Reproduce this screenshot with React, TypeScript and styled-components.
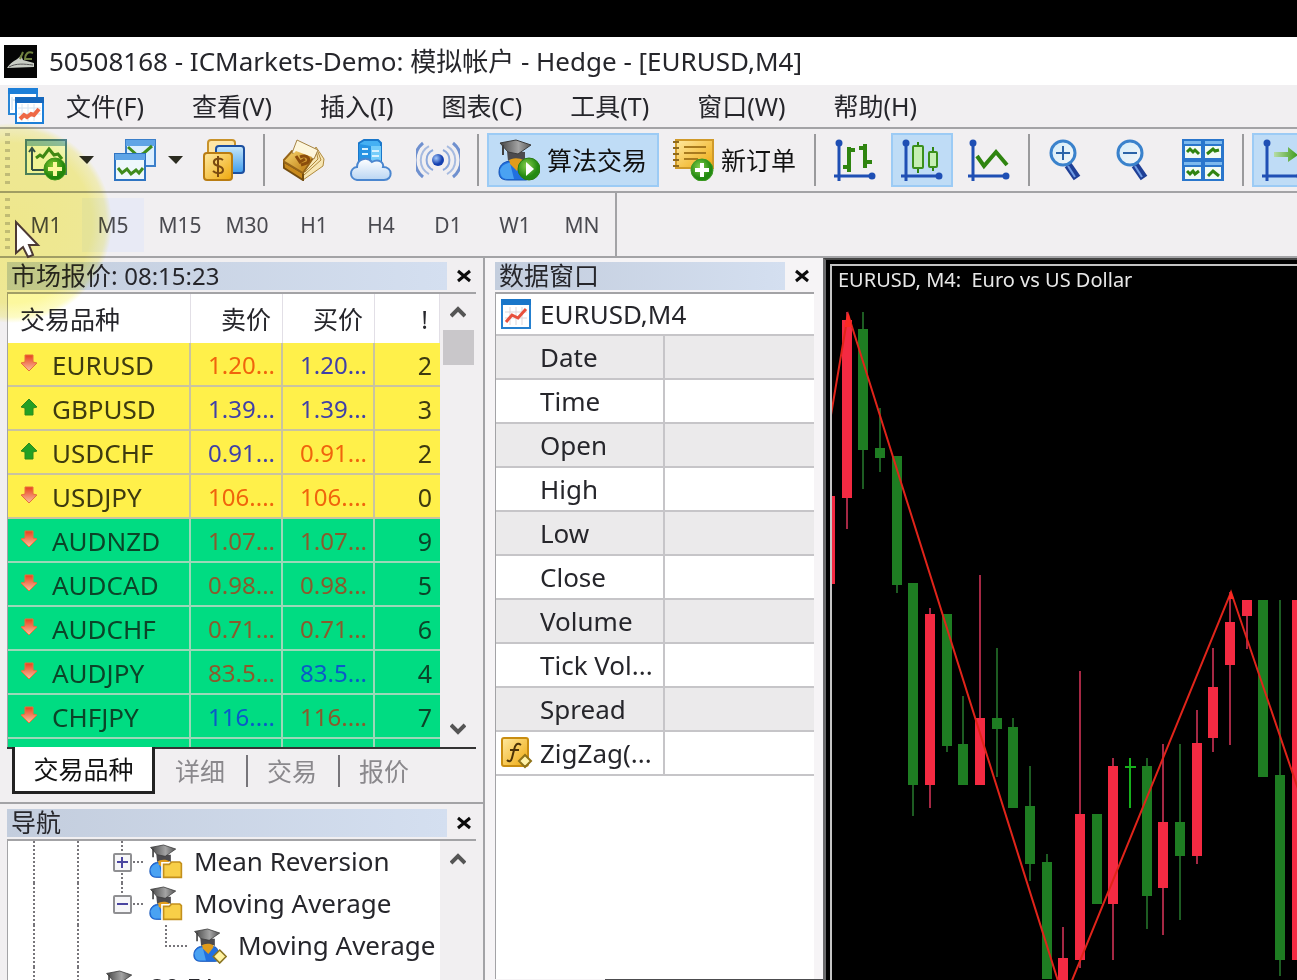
import React from "react";
import styled, { createGlobalStyle } from "styled-components";

const LINE = "#a3a3a6";
const FACE = "#f1eff1";

const GlobalStyle = createGlobalStyle`
  * { box-sizing: border-box; }
  html, body { margin: 0; padding: 0; background: #000; }
  body {
    font-family: "Noto Sans", "Noto Sans CJK SC", sans-serif;
    font-size: 25px;
    line-height: 32px;
    color: #26262b;
    overflow: hidden;
  }
  button {
    font: inherit;
    color: inherit;
    background: none;
    border: 0;
    padding: 0;
    margin: 0;
  }
  svg { display: block; flex: none; }
`;

/* ---------- frame ---------- */

const Window = styled.div`
  position: relative;
  display: flex;
  flex-direction: column;
  height: 100vh;
  padding-top: 37px;
  background: #000;
  overflow: hidden;
`;

const TitleBar = styled.header`
  display: flex;
  align-items: center;
  gap: 12px;
  height: 48px;
  padding: 0 4px;
  background: #fff;
`;

const TitleText = styled.h1`
  margin: 0;
  font-size: 26px;
  font-weight: 400;
  white-space: pre;
`;

const MenuBar = styled.nav`
  display: flex;
  align-items: center;
  gap: 48px;
  height: 42px;
  padding-left: 8px;
  background: ${FACE};
`;

const MenuIcon = styled.span`
  width: 36px;
  margin-right: -26px;
`;

const MenuItem = styled.button`
  white-space: nowrap;
`;

const ToolRow = styled.div<{ $height: number }>`
  display: flex;
  align-items: center;
  gap: 5px;
  height: ${(p) => p.$height}px;
  padding-left: 5px;
  border-top: 2px solid ${LINE};
  background: ${FACE};
  overflow: hidden;
`;

const Grip = styled.span`
  flex: none;
  width: 5px;
  height: 54px;
  background: repeating-linear-gradient(#c4c2c4 0 3px, transparent 3px 8px);
`;

const Separator = styled.span`
  flex: none;
  width: 2px;
  height: 52px;
  margin: 0 3px;
  background: #9a9a9c;
`;

const ToolButton = styled.button<{ $on?: boolean }>`
  flex: none;
  display: flex;
  align-items: center;
  justify-content: center;
  width: 62px;
  height: 54px;
  background: ${(p) => (p.$on ? "#bfdcf6" : "transparent")};
  border: 2px solid ${(p) => (p.$on ? "#9ccbf5" : "transparent")};
`;

const SplitButton = styled.button`
  flex: none;
  display: flex;
  align-items: center;
  gap: 12px;
  width: 84px;
  height: 54px;
  padding-left: 10px;
`;

const LabelButton = styled(ToolButton)<{ $width: number }>`
  width: ${(p) => p.$width}px;
  justify-content: flex-start;
  gap: 7px;
  padding-left: ${(p) => (p.$on ? 9 : 6)}px;
  white-space: nowrap;
  color: #111;
`;

const FrameButton = styled.button<{ $hot?: boolean }>`
  flex: none;
  width: 62px;
  height: 54px;
  font-size: 21px;
  color: #4a4a50;
  background: ${(p) => (p.$hot ? "#e8eaf5" : "transparent")};
`;

const FrameEnd = styled.span`
  flex: none;
  align-self: stretch;
  width: 2px;
  margin-left: -3px;
  background: ${LINE};
`;

const Workspace = styled.main`
  flex: 1;
  min-height: 0;
  display: flex;
  border-top: 2px solid ${LINE};
  background: ${FACE};
`;

/* ---------- docked panels ---------- */

const Dock = styled.div`
  flex: none;
  display: flex;
  flex-direction: column;
  width: 485px;
  border-right: 2px solid ${LINE};
`;

const Panel = styled.section<{ $grow?: boolean }>`
  display: flex;
  flex-direction: column;
  flex: ${(p) => (p.$grow ? "1" : "none")};
  min-height: 0;
  padding: 4px 7px 0;
`;

const DataDock = styled.section`
  flex: none;
  display: flex;
  flex-direction: column;
  width: 338px;
  padding: 4px 9px 0 10px;
  background: #f6f4f6;
`;

const DockEdge = styled.div`
  flex: none;
  height: 1px;
  margin: 0 -9px 0 110px;
  background: #4c4c4e;
`;

const PanelHead = styled.div`
  flex: none;
  display: flex;
  height: 28px;
  margin-bottom: 2px;
`;

const PanelTitle = styled.h2`
  flex: 1;
  margin: 0;
  padding-left: 4px;
  font-size: 25px;
  font-weight: 400;
  line-height: 27px;
  background: linear-gradient(90deg, #c3cddd, #d4dff0);
  white-space: nowrap;
`;

const ClockText = styled.span`
  font-size: 24px;
`;

const CloseButton = styled.button`
  width: 29px;
  padding-left: 4px;
  display: flex;
  align-items: center;
  justify-content: center;
`;

const PanelBody = styled.div<{ $height?: number }>`
  display: flex;
  flex: ${(p) => (p.$height ? "none" : "1")};
  height: ${(p) => (p.$height ? `${p.$height}px` : "auto")};
  min-height: 0;
  border-top: 2px solid ${LINE};
  border-left: 1px solid ${LINE};
  overflow: hidden;
`;

const ScrollBar = styled.div`
  flex: none;
  width: 36px;
  margin-left: auto;
  display: flex;
  flex-direction: column;
  align-items: center;
  background: ${FACE};
`;

const ScrollButton = styled.button<{ $end?: boolean }>`
  display: flex;
  align-items: center;
  justify-content: center;
  width: 32px;
  height: 36px;
  margin-top: ${(p) => (p.$end ? "auto" : "0")};
`;

const Thumb = styled.span`
  width: 31px;
  height: 35px;
  background: #c9c7ca;
`;

/* ---------- market watch ---------- */

const QuoteTable = styled.table`
  width: 432px;
  table-layout: fixed;
  border-collapse: separate;
  border-spacing: 0;
  background: #fff;
  align-self: flex-start;
`;

const QuoteHead = styled.th<{ $right?: boolean }>`
  height: 49px;
  padding: 0 11px 0 12px;
  font-weight: 400;
  text-align: ${(p) => (p.$right ? "right" : "left")};
  border-right: 1px solid #e2dfe6;
`;

const QuoteCell = styled.td<{ $tone: string }>`
  height: 44px;
  padding: 2px 6px 0 0;
  font-size: 24px;
  text-align: right;
  color: ${(p) => p.$tone};
  border-right: 2px solid #bfc0a8;
  border-bottom: 2px solid #bfc0a8;
  &:last-child {
    padding-right: 8px;
    font-size: 25px;
    border-right-width: 0;
  }
`;

const SymbolCell = styled(QuoteCell)`
  padding: 2px 0 0;
  font-size: 26px;
`;

const SymbolInner = styled.div`
  display: flex;
  align-items: center;
  gap: 14px;
  padding-left: 12px;
`;

const QuoteRow = styled.tr<{ $fill: string; $rule: string }>`
  background: ${(p) => p.$fill};
  ${QuoteCell} { border-color: ${(p) => p.$rule}; }
`;

const TabStrip = styled.div`
  display: flex;
  height: 49px;
  padding: 0 0 2px 5px;
  border-top: 2px solid #333;
`;

const ActiveTab = styled.button`
  width: 143px;
  height: 47px;
  margin-top: -2px;
  background: #fff;
  border: 3px solid #222;
  border-top: 0;
  color: #111;
`;

const Tab = styled.button`
  display: flex;
  align-items: center;
  justify-content: center;
  width: 92px;
  height: 44px;
  padding-right: 2px;
  color: #8a888c;
  &:not(:last-child)::after {
    content: "";
    width: 2px;
    height: 32px;
    margin: 0 -23px 0 21px;
    background: #77757a;
  }
`;

const DockSplit = styled.div`
  flex: none;
  height: 8px;
  margin-bottom: 1px;
  border-bottom: 2px solid ${LINE};
`;

/* ---------- navigator ---------- */

const Tree = styled.ul`
  flex: 1;
  margin: 0;
  padding: 0 0 0 4px;
  list-style: none;
  background: #fff;
`;

const TreeRow = styled.li`
  display: flex;
  align-items: center;
  height: 42px;
  white-space: nowrap;
  font-size: 26px;
  line-height: 28px;
`;

const TreeIcon = styled.span`
  display: flex;
  justify-content: center;
  width: 44px;
  margin-right: 6px;
`;

const TreeLabel = styled.span`
  padding-bottom: 3px;
`;

/* ---------- data window ---------- */

const DataBody = styled(PanelBody)`
  background: #fff;
  font-size: 26px;
`;

const DataTable = styled.table`
  width: 100%;
  table-layout: fixed;
  border-collapse: separate;
  border-spacing: 0;
  align-self: flex-start;
`;

const DataRow = styled.tr<{ $shade?: boolean }>`
  background: ${(p) => (p.$shade ? "#ebeaeb" : "#fff")};
`;

const DataName = styled.th<{ $wide?: boolean }>`
  height: ${(p) => (p.$wide ? 42 : 44)}px;
  padding: 0;
  font-weight: 400;
  text-align: left;
  border-bottom: 2px solid #c6c5c8;
  border-right: ${(p) => (p.$wide ? "0" : "2px solid #c6c5c8")};
`;

const DataValue = styled.td`
  border-bottom: 2px solid #c6c5c8;
`;

const NameInner = styled.div`
  display: flex;
  align-items: center;
  padding-left: 5px;
  white-space: nowrap;
`;

const NameIcon = styled.span`
  flex: none;
  width: 39px;
`;

/* ---------- chart ---------- */

const ChartWindow = styled.section`
  flex: 1;
  min-width: 0;
  display: flex;
  padding: 4px 0 0 4px;
  border-left: 3px solid #6b6b6d;
  border-top: 2px solid #444;
  background: #000;
`;

const ChartArea = styled.div`
  flex: 1;
  min-width: 0;
  display: flex;
  flex-direction: column;
  border-left: 2px solid #c4c4c4;
  border-top: 2px solid #c4c4c4;
`;

const ChartTitle = styled.h2`
  flex: none;
  margin: 0;
  padding-left: 6px;
  height: 27px;
  font-size: 20px;
  font-weight: 400;
  line-height: 28px;
  color: #e8e8e8;
  white-space: pre;
`;

const Plot = styled.div`
  flex: 1;
  min-height: 0;
  overflow: hidden;
`;

/* ---------- pointer ---------- */

const Spotlight = styled.div`
  position: absolute;
  left: -88px;
  top: 123px;
  width: 200px;
  height: 200px;
  border-radius: 50%;
  background: radial-gradient(closest-side, #fcf794 0, #fcf89e 80%, #fdfbc4 94%, #fff 100%);
  mix-blend-mode: multiply;
  pointer-events: none;
`;

const Pointer = styled.div`
  position: absolute;
  left: 13px;
  top: 219px;
  pointer-events: none;
`;

/* ---------- icons ---------- */

const Gradients = () => (
  <svg width="0" height="0" style={{ position: "absolute" }} aria-hidden>
    <defs>
      <linearGradient id="gold" x1="0" y1="0" x2="1" y2="1">
        <stop offset="0" stopColor="#ffe9a0" />
        <stop offset="1" stopColor="#eea80c" />
      </linearGradient>
      <linearGradient id="brass" x1="0" y1="0" x2="1" y2="1">
        <stop offset="0" stopColor="#f6d26a" />
        <stop offset="1" stopColor="#b9780f" />
      </linearGradient>
      <linearGradient id="sky" x1="0" y1="0" x2="0" y2="1">
        <stop offset="0" stopColor="#c9e8fb" />
        <stop offset="1" stopColor="#3f9ded" />
      </linearGradient>
      <linearGradient id="cloud" x1="0" y1="0" x2="0" y2="1">
        <stop offset="0" stopColor="#ffffff" />
        <stop offset="1" stopColor="#b9d5f3" />
      </linearGradient>
      <linearGradient id="cap" x1="0" y1="0" x2="1" y2="0">
        <stop offset="0" stopColor="#444" />
        <stop offset="0.6" stopColor="#a4a4a4" />
        <stop offset="1" stopColor="#555" />
      </linearGradient>
      <radialGradient id="leaf" cx="0.4" cy="0.35">
        <stop offset="0" stopColor="#86cf4c" />
        <stop offset="1" stopColor="#238a12" />
      </radialGradient>
      <radialGradient id="ball" cx="0.35" cy="0.35">
        <stop offset="0" stopColor="#a5c8fa" />
        <stop offset="1" stopColor="#1440b0" />
      </radialGradient>
      <linearGradient id="down" x1="0" y1="0" x2="0" y2="1">
        <stop offset="0" stopColor="#e8401c" />
        <stop offset="1" stopColor="#fbc0a0" />
      </linearGradient>
      <linearGradient id="glass" x1="0" y1="0" x2="1" y2="1">
        <stop offset="0" stopColor="#d2ecfa" />
        <stop offset="1" stopColor="#f7f7f7" />
      </linearGradient>
      <linearGradient id="shift" x1="0" y1="0" x2="1" y2="0">
        <stop offset="0" stopColor="#b6dca6" />
        <stop offset="1" stopColor="#3f9c1c" />
      </linearGradient>
    </defs>
  </svg>
);

const PlusBadge = ({ x, y, r = 11 }: { x: number; y: number; r?: number }) => (
  <g>
    <circle cx={x} cy={y} r={r} fill="url(#leaf)" stroke="#3f9a24" />
    <path d={`M${x - 7} ${y}H${x + 7}M${x} ${y - 7}V${y + 7}`} stroke="#fff" strokeWidth="4" />
  </g>
);

const LogoIcon = () => (
  <svg width="33" height="33" viewBox="0 0 33 33">
    <rect width="33" height="33" fill="#050505" />
    <path d="M3 23C8 15 13 16 17 10L19 15L30 18V22Z" fill="#c9cdc4" />
    <path d="M5 22C12 18 20 19 29 20" stroke="#555" fill="none" />
    <path d="M19 7L16 14M29 8C24 6 21 9 21 14L28 14" stroke="#71813f" strokeWidth="2" fill="none" />
  </svg>
);

const TerminalIcon = () => (
  <svg width="36" height="36" viewBox="0 0 36 36">
    <rect x="1" y="1" width="28" height="25" fill="#fff" stroke="#2a86d6" strokeWidth="2" />
    <rect x="0" y="0" width="30" height="6" fill="#1d7fd8" />
    <path d="M4 9V22M8 12H5" stroke="#bcd7ee" />
    <rect x="8" y="10" width="27" height="25" fill="#fff" stroke="#1d7fd8" strokeWidth="2" />
    <rect x="7" y="9" width="29" height="6" fill="#1668bd" />
    <path d="M14 16V33M20 16V33M26 16V33M10 20H33M10 26H33" stroke="#d6e4f0" />
    <path d="M12 31L16 27L19 29L23 26L26 27L31 21" stroke="#ee6846" strokeWidth="4" fill="none" />
  </svg>
);

const NewChartIcon = () => (
  <svg width="42" height="42" viewBox="0 0 42 42">
    <rect x="1" y="1" width="40" height="34" fill="#f2faf2" stroke="#4d8290" strokeWidth="2" />
    <rect x="2" y="2" width="38" height="5" fill="#8dbfc9" />
    <path d="M7 31V10M4 13L7 9L10 13M7 31H20" stroke="#33536d" strokeWidth="2" fill="none" />
    <path d="M11 19L15 16L18 18L24 10L29 16L33 15L37 20" stroke="#3f8c1c" strokeWidth="3" fill="none" />
    <PlusBadge x={30} y={30} />
  </svg>
);

const ProfilesIcon = () => (
  <svg width="42" height="42" viewBox="0 0 42 42">
    <rect x="12" y="1" width="29" height="26" fill="#dcefff" stroke="#3b7fca" strokeWidth="2" />
    <rect x="12" y="1" width="29" height="6" fill="#5fa4e6" />
    <path d="M14 8L24 17L30 14L38 7" stroke="#3f8c1c" strokeWidth="3" fill="none" />
    <rect x="1" y="15" width="30" height="26" fill="#eef8fb" stroke="#2f74c2" strokeWidth="2" />
    <rect x="1" y="15" width="30" height="6" fill="#5fa4e6" />
    <path d="M4 29L8 34L13 30L17 35L22 31L25 34L29 29" stroke="#3f8c1c" strokeWidth="3" fill="none" />
  </svg>
);

const SymbolsIcon = () => (
  <svg width="42" height="42" viewBox="0 0 42 42">
    <rect x="5" y="1" width="27" height="26" rx="3" fill="#ffe7a6" stroke="#c8922a" strokeWidth="2" />
    <rect x="13" y="7" width="28" height="27" rx="3" fill="url(#sky)" stroke="#1c4fa0" strokeWidth="2" />
    <rect x="1" y="14" width="28" height="27" rx="3" fill="url(#gold)" stroke="#b97c12" strokeWidth="2" />
    <path d="M20 21C16 18 10 20 11 24C12 28 20 26 20 31C20 35 13 35 10 32M15 17V38" stroke="#7a4a10" strokeWidth="2" fill="none" />
  </svg>
);

const BookIcon = () => (
  <svg width="42" height="42" viewBox="0 0 42 42">
    <path d="M33 8L41 20L40 27L20 41L20 33Z" fill="#f7e6b4" stroke="#b08a3c" />
    <path d="M35 13L38 21L21 36M33 11L35 20L22 33" stroke="#b08a3c" fill="none" />
    <path d="M0 22L20 34V41L1 29Z" fill="#c98a1c" stroke="#744d10" strokeWidth="2" />
    <path d="M0 22L9 12L32 16L20 34Z" fill="url(#brass)" stroke="#96651a" strokeWidth="2" />
    <path d="M9 14L14 1L35 11L31 20L24 17Z" fill="#fdf6dc" stroke="#a58344" />
    <path d="M8 17L13 12L29 18L20 31L4 22Z" fill="url(#brass)" />
    <path d="M13 17L17 23L22 20M17 18C24 15 28 20 24 24L18 26" stroke="#8b4d0c" strokeWidth="3" fill="none" />
  </svg>
);

const CloudIcon = () => (
  <svg width="42" height="42" viewBox="0 0 42 42">
    <path d="M9 4L14 1H28L31 4V25H9Z" fill="#45b0f3" stroke="#1a77ca" strokeWidth="2" />
    <path d="M9 5L21 7V25H9Z" fill="#2793e4" />
    <path d="M21 7H31V25H21Z" fill="#75cdfa" />
    <path d="M22 12H29M22 17H29M12 10H18M12 15H18" stroke="#d8f2ff" strokeWidth="2" />
    <path d="M7 41C-1 40 -1 29 7 28C7 20 17 17 22 23C29 19 34 24 33 28C43 28 43 41 34 41Z" fill="url(#cloud)" stroke="#4b86cf" strokeWidth="2" />
  </svg>
);

const SignalIcon = () => (
  <svg width="44" height="42" viewBox="0 0 44 42">
    <circle cx="22" cy="21" r="6" fill="url(#ball)" />
    <g fill="none" strokeWidth="2">
      <path d="M17 11A11 11 0 0 0 17 31M27 11A11 11 0 0 1 27 31" stroke="#8ba8dc" />
      <path d="M13 7A16 16 0 0 0 13 35M31 7A16 16 0 0 1 31 35" stroke="#a7bbe0" />
      <path d="M7 4A22 22 0 0 0 7 38M37 4A22 22 0 0 1 37 38" stroke="#6f90cf" strokeWidth="3" />
    </g>
  </svg>
);

const Graduate = () => (
  <g>
    <path d="M1 33C1 25 7 22 14 22L27 23C33 25 34 41 28 41H10C3 41 1 38 1 33Z" fill="#2170e0" stroke="#1454b6" />
    <path d="M2 31C4 26 8 24 12 24L16 40H9C4 40 2 36 2 31Z" fill="#4aa2f2" />
    <path d="M10 15H25V24L19 32L12 25Z" fill="#e09c1c" />
    <path d="M9 12L27 13V22C20 18 14 19 10 22Z" fill="#4c4b4e" />
    <path d="M2 4L18 1L33 6L20 15L10 13Z" fill="url(#cap)" stroke="#3c3c3c" />
    <path d="M5 6V16" stroke="#3f3f3f" strokeWidth="2" />
  </g>
);

const AlgoIcon = () => (
  <svg width="42" height="42" viewBox="0 0 42 42">
    <Graduate />
    <circle cx="31" cy="30" r="11" fill="url(#leaf)" stroke="#2b7a14" />
    <path d="M28 23V37L36 30Z" fill="#fff" />
  </svg>
);

const OrderIcon = () => (
  <svg width="42" height="42" viewBox="0 0 42 42">
    <rect x="4" y="1" width="37" height="28" fill="url(#gold)" stroke="#d09a2a" strokeWidth="2" />
    <path d="M1 3H7M1 9H7M1 15H7M1 21H7M1 27H7" stroke="#8f6a1e" strokeWidth="2" />
    <path d="M12 8H34M12 14H34M12 20H26" stroke="#a87a1e" strokeWidth="2" />
    <PlusBadge x={30} y={31} />
  </svg>
);

const Axes = () => (
  <g stroke="#1f4fb4" strokeWidth="3" fill="#1f4fb4">
    <path d="M5 42V5M0 37H38" fill="none" />
    <circle cx="5" cy="4" r="2" />
    <circle cx="38" cy="37" r="2" />
  </g>
);

const BarsIcon = () => (
  <svg width="42" height="42" viewBox="0 0 42 42">
    <Axes />
    <path d="M15 8V33M15 11H21M9 28H15M31 5V29M25 9H31M31 23H38" stroke="#2f8410" strokeWidth="4" />
  </svg>
);

const CandlesIcon = () => (
  <svg width="42" height="42" viewBox="0 0 42 42">
    <Axes />
    <path d="M17 3V34M32 8V32" stroke="#2f8410" strokeWidth="2" />
    <rect x="12" y="7" width="10" height="22" rx="1" fill="#c5efb4" stroke="#3a901c" strokeWidth="2" />
    <rect x="28" y="13" width="8" height="15" rx="1" fill="#c5efb4" stroke="#3a901c" strokeWidth="2" />
  </svg>
);

const LineIcon = () => (
  <svg width="42" height="42" viewBox="0 0 42 42">
    <Axes />
    <path d="M9 17L16 27L28 13L39 26" stroke="#2f8410" strokeWidth="4" fill="none" />
  </svg>
);

const ShiftIcon = () => (
  <svg width="42" height="42" viewBox="0 0 42 42">
    <Axes />
    <path d="M12 13H26V8L36 16L26 23V18H12Z" fill="url(#shift)" />
  </svg>
);

const Magnifier = ({ plus }: { plus?: boolean }) => (
  <svg width="42" height="42" viewBox="0 0 42 42">
    <path d="M20 26L29 39" stroke="#1f3f96" strokeWidth="8" />
    <path d="M20 27L27 38" stroke="#6f9be4" strokeWidth="2" />
    <circle cx="15" cy="14" r="12" fill="url(#glass)" stroke="#3a82cc" strokeWidth="3" />
    <path d={plus ? "M8 14H22M15 7V21" : "M8 14H22"} stroke="#2b64a8" strokeWidth="2" />
  </svg>
);

const TileIcon = () => (
  <svg width="42" height="42" viewBox="0 0 42 42">
    <rect width="42" height="42" fill="#2a76cc" />
    <path d="M2 2H19V5H2ZM23 2H40V5H23ZM2 23H19V26H2ZM23 23H40V26H23Z" fill="#7cb9ee" />
    <path d="M3 7H19V19H3ZM23 7H39V19H23ZM3 28H19V40H3ZM23 28H39V40H23Z" fill="#f2fbf4" />
    <path d="M5 13L8 10L11 13L13 11L17 15M25 15L31 10L33 12L37 11M5 32L8 35L11 32L13 35L17 32M26 37L31 32L37 37" stroke="#2f8410" strokeWidth="3" fill="none" />
  </svg>
);

const Caret = () => (
  <svg width="15" height="9" viewBox="0 0 15 9">
    <path d="M0 0H15L8 8Z" fill="#2b2b20" />
  </svg>
);

const CloseIcon = () => (
  <svg width="14" height="14" viewBox="0 0 14 14">
    <path d="M1 2L13 12M13 2L1 12" stroke="#0c0c0c" strokeWidth="3" />
  </svg>
);

const Chevron = ({ up }: { up?: boolean }) => (
  <svg width="16" height="12" viewBox="0 0 16 12">
    <path d={up ? "M1 10L8 3L15 10" : "M1 2L8 9L15 2"} stroke="#555" strokeWidth="4" fill="none" />
  </svg>
);

const Trend = ({ up }: { up: boolean }) => (
  <svg width="18" height="22" viewBox="0 0 18 22">
    {up ? (
      <path d="M9 1L17 9L13 10V17H5V10L1 9Z" fill="#23a023" stroke="#2d8a1c" />
    ) : (
      <path d="M5 1H13V8L17 9L9 17L1 9L5 8Z" fill="url(#down)" stroke="#e8703c" />
    )}
  </svg>
);

const ChartDocIcon = () => (
  <svg width="30" height="30" viewBox="0 0 30 30">
    <rect x="1" y="1" width="28" height="28" fill="#fff" stroke="#2580cf" strokeWidth="2" />
    <rect width="30" height="6" fill="#1976c9" />
    <path d="M9 8V26M15 8V26M21 8V26M4 13H26M4 19H26" stroke="#ddd5d8" />
    <path d="M5 23L11 16L17 19L25 10" stroke="#e8503c" strokeWidth="3" fill="none" />
  </svg>
);

const FunctionIcon = () => (
  <svg width="32" height="32" viewBox="0 0 32 32">
    <rect x="1" y="1" width="26" height="28" rx="2" fill="url(#gold)" stroke="#c98d10" strokeWidth="2" />
    <path d="M20 8C16 5 14 8 13 13L11 21C10 25 8 25 6 23M9 13H18" stroke="#4c3206" strokeWidth="2" fill="none" />
    <path d="M24 18L30 24L24 30L18 24Z" fill="#fff2a8" stroke="#8f7318" strokeWidth="2" />
  </svg>
);

const ExpertFolderIcon = () => (
  <svg width="34" height="36" viewBox="0 0 42 44">
    <Graduate />
    <path d="M15 22H41V43H15Z" fill="#fff" />
    <path d="M18 25H25L28 22H38L40 24V41H18Z" fill="#f8cf48" stroke="#c3901c" strokeWidth="2" />
  </svg>
);

const ExpertIcon = () => (
  <svg width="34" height="36" viewBox="0 0 42 44">
    <Graduate />
    <path d="M33 27L41 35L33 43L25 35Z" fill="#fff2a0" stroke="#8a7420" strokeWidth="2" />
  </svg>
);

type GuideKind = "line" | "plus" | "minus" | "elbow" | "blank";

const guidePath: Record<GuideKind, string> = {
  line: "M22 0V42",
  plus: "M22 0V11M22 32V42M33 21H44",
  minus: "M22 0V11M33 21H44",
  elbow: "M22 0V21H44",
  blank: "",
};

const Guide = ({ kind }: { kind: GuideKind }) => (
  <svg width="44" height="42" viewBox="0 0 44 42">
    <path d={guidePath[kind]} stroke="#77757a" strokeWidth="2" strokeDasharray="2 2" fill="none" />
    {(kind === "plus" || kind === "minus") && (
      <g>
        <rect x="14" y="13" width="17" height="17" rx="1" fill="#f6f6f8" stroke="#8f8f92" strokeWidth="2" />
        <path d={kind === "plus" ? "M17 21H28M22 16V27" : "M17 21H28"} stroke="#4a45a0" strokeWidth="2" />
      </g>
    )}
  </svg>
);

const PointerIcon = () => (
  <svg width="28" height="40" viewBox="0 0 28 40">
    <path d="M3 3V34L10 28L15 38L20 36L16 26H25Z" fill="#fff" stroke="#4d3a34" strokeWidth="2" />
  </svg>
);

/* ---------- data ---------- */

const menus = ["文件(F)", "查看(V)", "插入(I)", "图表(C)", "工具(T)", "窗口(W)", "帮助(H)"];
const frames = ["M1", "M5", "M15", "M30", "H1", "H4", "D1", "W1", "MN"];

const yellow = { fill: "#fff04a", rule: "#c9c3a0", text: "#3d3a10", up: "#4040a8", down: "#f0640c" };
const green = { fill: "#00dc82", rule: "#9bd8b8", text: "#0b4428", up: "#0a5ac8", down: "#8a5a2c" };

type Quote = [string, boolean, string, boolean, string, boolean, string];

/* symbol, rising, bid, bid up, ask, ask up, spread */
const quotes: Quote[] = [
  ["EURUSD", false, "1.20...", false, "1.20...", true, "2"],
  ["GBPUSD", true, "1.39...", true, "1.39...", true, "3"],
  ["USDCHF", true, "0.91...", true, "0.91...", false, "2"],
  ["USDJPY", false, "106....", false, "106....", false, "0"],
  ["AUDNZD", false, "1.07...", false, "1.07...", false, "9"],
  ["AUDCAD", false, "0.98...", false, "0.98...", false, "5"],
  ["AUDCHF", false, "0.71...", false, "0.71...", false, "6"],
  ["AUDJPY", false, "83.5...", false, "83.5...", true, "4"],
  ["CHFJPY", false, "116....", true, "116....", false, "7"],
];

const fields = ["Date", "Time", "Open", "High", "Low", "Close", "Volume", "Tick Vol...", "Spread"];

/* direction, body top, body bottom, wick top, wick bottom */
type Bar = ["r" | "g" | "x", number, number, number, number];

const bars: Bar[] = [
  ["r", 203, 291, 203, 291],
  ["r", 27, 205, 19, 236],
  ["g", 36, 157, 19, 196],
  ["g", 155, 165, 115, 179],
  ["g", 163, 292, 163, 300],
  ["g", 290, 492, 290, 523],
  ["r", 321, 492, 315, 515],
  ["g", 321, 453, 321, 459],
  ["g", 451, 492, 403, 492],
  ["r", 425, 492, 282, 492],
  ["g", 425, 436, 355, 484],
  ["g", 434, 515, 425, 515],
  ["g", 513, 571, 473, 588],
  ["g", 569, 686, 561, 686],
  ["r", 665, 700, 634, 700],
  ["r", 521, 667, 378, 675],
  ["g", 521, 611, 521, 611],
  ["r", 473, 611, 465, 667],
  ["x", 474, 474, 465, 515],
  ["g", 473, 603, 465, 636],
  ["r", 529, 595, 451, 642],
  ["g", 529, 563, 451, 627],
  ["r", 450, 563, 417, 571],
  ["r", 394, 445, 355, 459],
  ["r", 329, 372, 299, 452],
  ["r", 307, 323, 307, 356],
  ["g", 307, 484, 307, 484],
  ["g", 482, 667, 307, 683],
  ["r", 307, 667, 307, 667],
];

const zigzag = [[-1, 122], [16, 21], [232, 707], [399, 299], [465, 493], [500, 595]];

const Candles = () => (
  <svg width="100%" height="100%" role="img" aria-label="EURUSD M4">
    {bars.map(([kind, top, bottom, high, low], i) => {
      const x = Math.round(-2 + (i * 50) / 3);
      if (kind === "x") {
        return <path key={i} d={`M${x} ${high}V${low}M${x - 5} ${top}H${x + 6}`} stroke="#17b01c" strokeWidth="2" />;
      }
      const red = kind === "r";
      return (
        <g key={i}>
          <path d={`M${x} ${high}V${low}`} stroke={red ? "#a52844" : "#1d5c22"} strokeWidth="2" />
          <rect x={x - 5} y={top} width="10" height={bottom - top} fill={red ? "#f42a42" : "#1e7d22"} />
        </g>
      );
    })}
    <polyline points={zigzag.map((p) => p.join(",")).join(" ")} fill="none" stroke="#e0241a" strokeWidth="2" />
    <path d="M16 18L12 34H20Z M399 298L396 306H402Z" fill="#fb2a24" />
  </svg>
);

/* ---------- page ---------- */

const Head = ({ children }: { children: React.ReactNode }) => (
  <PanelHead>
    <PanelTitle>{children}</PanelTitle>
    <CloseButton aria-label="关闭"><CloseIcon /></CloseButton>
  </PanelHead>
);

export default function App() {
  return (
    <Window lang="zh-CN">
      <GlobalStyle />
      <Gradients />
      <TitleBar>
        <LogoIcon />
        <TitleText>50508168 - ICMarkets-Demo: 模拟帐户 - Hedge - [EURUSD,M4]</TitleText>
      </TitleBar>
      <MenuBar>
        <MenuIcon><TerminalIcon /></MenuIcon>
        {menus.map((m) => <MenuItem key={m}>{m}</MenuItem>)}
      </MenuBar>
      <ToolRow $height={64}>
        <Grip />
        <SplitButton aria-label="新图表"><NewChartIcon /><Caret /></SplitButton>
        <SplitButton aria-label="配置"><ProfilesIcon /><Caret /></SplitButton>
        <ToolButton aria-label="交易品种"><SymbolsIcon /></ToolButton>
        <Separator />
        <ToolButton aria-label="市场"><BookIcon /></ToolButton>
        <ToolButton aria-label="云"><CloudIcon /></ToolButton>
        <ToolButton aria-label="信号"><SignalIcon /></ToolButton>
        <Separator />
        <LabelButton $on $width={172}><AlgoIcon />算法交易</LabelButton>
        <LabelButton $width={142}><OrderIcon />新订单</LabelButton>
        <Separator />
        <ToolButton aria-label="柱状图"><BarsIcon /></ToolButton>
        <ToolButton $on aria-label="蜡烛图"><CandlesIcon /></ToolButton>
        <ToolButton aria-label="折线图"><LineIcon /></ToolButton>
        <Separator />
        <ToolButton aria-label="放大"><Magnifier plus /></ToolButton>
        <ToolButton aria-label="缩小"><Magnifier /></ToolButton>
        <ToolButton aria-label="平铺"><TileIcon /></ToolButton>
        <Separator />
        <ToolButton $on aria-label="图表平移"><ShiftIcon /></ToolButton>
      </ToolRow>
      <ToolRow $height={65}>
        <Grip />
        {frames.map((f) => <FrameButton key={f} $hot={f === "M5"}>{f}</FrameButton>)}
        <FrameEnd />
      </ToolRow>
      <Workspace>
        <Dock>
          <Panel>
            <Head>市场报价: <ClockText>08:15:23</ClockText></Head>
            <PanelBody $height={455}>
              <QuoteTable>
                <colgroup>
                  <col width="183" /><col width="92" /><col width="92" /><col width="65" />
                </colgroup>
                <thead>
                  <tr>
                    <QuoteHead>交易品种</QuoteHead>
                    <QuoteHead $right>卖价</QuoteHead>
                    <QuoteHead $right>买价</QuoteHead>
                    <QuoteHead $right>!</QuoteHead>
                  </tr>
                </thead>
                <tbody>
                  {quotes.map(([name, rising, bid, bidUp, ask, askUp, spread], i) => {
                    const c = i < 4 ? yellow : green;
                    return (
                      <QuoteRow key={name} $fill={c.fill} $rule={c.rule}>
                        <SymbolCell $tone={c.text}><SymbolInner><Trend up={rising} />{name}</SymbolInner></SymbolCell>
                        <QuoteCell $tone={bidUp ? c.up : c.down}>{bid}</QuoteCell>
                        <QuoteCell $tone={askUp ? c.up : c.down}>{ask}</QuoteCell>
                        <QuoteCell $tone={c.text}>{spread}</QuoteCell>
                      </QuoteRow>
                    );
                  })}
                  <QuoteRow $fill={green.fill} $rule={green.rule}>
                    <QuoteCell $tone={green.text} /><QuoteCell $tone={green.text} />
                    <QuoteCell $tone={green.text} /><QuoteCell $tone={green.text} />
                  </QuoteRow>
                </tbody>
              </QuoteTable>
              <ScrollBar>
                <ScrollButton aria-label="向上滚动"><Chevron up /></ScrollButton>
                <Thumb />
                <ScrollButton $end aria-label="向下滚动"><Chevron /></ScrollButton>
              </ScrollBar>
            </PanelBody>
            <TabStrip>
              <ActiveTab>交易品种</ActiveTab>
              <Tab>详细</Tab>
              <Tab>交易</Tab>
              <Tab>报价</Tab>
            </TabStrip>
          </Panel>
          <DockSplit />
          <Panel $grow>
            <Head>导航</Head>
            <PanelBody>
              <Tree>
                <TreeRow>
                  <Guide kind="line" /><Guide kind="line" /><Guide kind="plus" />
                  <TreeIcon><ExpertFolderIcon /></TreeIcon><TreeLabel>Mean Reversion</TreeLabel>
                </TreeRow>
                <TreeRow>
                  <Guide kind="line" /><Guide kind="line" /><Guide kind="minus" />
                  <TreeIcon><ExpertFolderIcon /></TreeIcon><TreeLabel>Moving Average</TreeLabel>
                </TreeRow>
                <TreeRow>
                  <Guide kind="line" /><Guide kind="line" /><Guide kind="blank" /><Guide kind="elbow" />
                  <TreeIcon><ExpertIcon /></TreeIcon><TreeLabel>Moving Average</TreeLabel>
                </TreeRow>
                <TreeRow>
                  <Guide kind="line" /><Guide kind="line" />
                  <TreeIcon><ExpertIcon /></TreeIcon><TreeLabel>20 EA</TreeLabel>
                </TreeRow>
              </Tree>
              <ScrollBar>
                <ScrollButton aria-label="向上滚动"><Chevron up /></ScrollButton>
              </ScrollBar>
            </PanelBody>
          </Panel>
        </Dock>
        <DataDock>
          <Head>数据窗口</Head>
          <DataBody>
            <DataTable>
              <colgroup><col width="169" /><col /></colgroup>
              <tbody>
                <DataRow>
                  <DataName $wide colSpan={2}>
                    <NameInner><NameIcon><ChartDocIcon /></NameIcon>EURUSD,M4</NameInner>
                  </DataName>
                </DataRow>
                {fields.map((f, i) => (
                  <DataRow key={f} $shade={i % 2 === 0}>
                    <DataName><NameInner><NameIcon />{f}</NameInner></DataName>
                    <DataValue />
                  </DataRow>
                ))}
                <DataRow>
                  <DataName><NameInner><NameIcon><FunctionIcon /></NameIcon>ZigZag(...</NameInner></DataName>
                  <DataValue />
                </DataRow>
              </tbody>
            </DataTable>
          </DataBody>
          <DockEdge />
        </DataDock>
        <ChartWindow>
          <ChartArea>
            <ChartTitle>EURUSD, M4:  Euro vs US Dollar</ChartTitle>
            <Plot><Candles /></Plot>
          </ChartArea>
        </ChartWindow>
      </Workspace>
      <Spotlight />
      <Pointer><PointerIcon /></Pointer>
    </Window>
  );
}
